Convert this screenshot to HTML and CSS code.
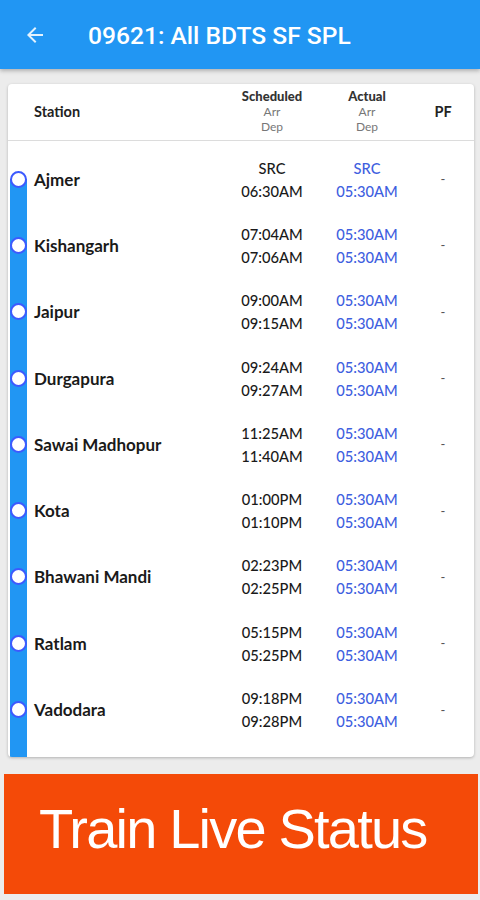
FILE: index.html
```html
<!DOCTYPE html>
<html lang="en">
<head>
  <meta charset="UTF-8">
  <meta name="viewport" content="width=device-width, initial-scale=1.0">
  <title>09621: All BDTS SF SPL</title>
  <link rel="stylesheet" href="styles.css">
</head>
<body>

<!-- Toolbar -->
<header class="toolbar">
  <svg class="back" width="24" height="24" viewBox="0 0 24 24">
    <path d="M20 11H7.83l5.59-5.59L12 4l-8 8 8 8 1.41-1.41L7.83 13H20v-2z" fill="#e3f2fd"/>
  </svg>
  <h1>09621: All BDTS SF SPL</h1>
</header>

<!-- Schedule card -->
<section class="card">
  <div class="head-row">
    <div class="col-station">Station</div>
    <div class="col-time">
      <b>Scheduled</b>
      <span>Arr</span>
      <span>Dep</span>
    </div>
    <div class="col-time">
      <b>Actual</b>
      <span>Arr</span>
      <span>Dep</span>
    </div>
    <div class="col-pf">PF</div>
  </div>

  <div class="stops">
    <div class="stop">
      <div class="rail"><i class="dot"></i></div>
      <div class="name">Ajmer</div>
      <div class="times"><span>SRC</span><span>06:30AM</span></div>
      <div class="times actual"><span>SRC</span><span>05:30AM</span></div>
      <div class="pf">-</div>
    </div>
    <div class="stop">
      <div class="rail"><i class="dot"></i></div>
      <div class="name">Kishangarh</div>
      <div class="times"><span>07:04AM</span><span>07:06AM</span></div>
      <div class="times actual"><span>05:30AM</span><span>05:30AM</span></div>
      <div class="pf">-</div>
    </div>
    <div class="stop">
      <div class="rail"><i class="dot"></i></div>
      <div class="name">Jaipur</div>
      <div class="times"><span>09:00AM</span><span>09:15AM</span></div>
      <div class="times actual"><span>05:30AM</span><span>05:30AM</span></div>
      <div class="pf">-</div>
    </div>
    <div class="stop">
      <div class="rail"><i class="dot"></i></div>
      <div class="name">Durgapura</div>
      <div class="times"><span>09:24AM</span><span>09:27AM</span></div>
      <div class="times actual"><span>05:30AM</span><span>05:30AM</span></div>
      <div class="pf">-</div>
    </div>
    <div class="stop">
      <div class="rail"><i class="dot"></i></div>
      <div class="name">Sawai Madhopur</div>
      <div class="times"><span>11:25AM</span><span>11:40AM</span></div>
      <div class="times actual"><span>05:30AM</span><span>05:30AM</span></div>
      <div class="pf">-</div>
    </div>
    <div class="stop">
      <div class="rail"><i class="dot"></i></div>
      <div class="name">Kota</div>
      <div class="times"><span>01:00PM</span><span>01:10PM</span></div>
      <div class="times actual"><span>05:30AM</span><span>05:30AM</span></div>
      <div class="pf">-</div>
    </div>
    <div class="stop">
      <div class="rail"><i class="dot"></i></div>
      <div class="name">Bhawani Mandi</div>
      <div class="times"><span>02:23PM</span><span>02:25PM</span></div>
      <div class="times actual"><span>05:30AM</span><span>05:30AM</span></div>
      <div class="pf">-</div>
    </div>
    <div class="stop">
      <div class="rail"><i class="dot"></i></div>
      <div class="name">Ratlam</div>
      <div class="times"><span>05:15PM</span><span>05:25PM</span></div>
      <div class="times actual"><span>05:30AM</span><span>05:30AM</span></div>
      <div class="pf">-</div>
    </div>
    <div class="stop">
      <div class="rail"><i class="dot"></i></div>
      <div class="name">Vadodara</div>
      <div class="times"><span>09:18PM</span><span>09:28PM</span></div>
      <div class="times actual"><span>05:30AM</span><span>05:30AM</span></div>
      <div class="pf">-</div>
    </div>
    <div class="rail-tail"></div>
  </div>
</section>

<!-- Promo banner -->
<div class="banner">Train Live Status</div>

</body>
</html>
```

FILE: styles.css
```css
body {
  margin: 0;
  background-color: #ececec;
  font-family: Lato, "Open Sans", sans-serif;
  color: #222;
}
.toolbar {
  display: flex;
  align-items: center;
  height: 69px;
  padding: 1px 0 0 23px;
  box-sizing: border-box;
  background-color: #2196f3;
  box-shadow: 0 2px 4px rgba(0, 0, 0, 0.25);
}
.toolbar h1 {
  margin: 0 0 0 41px;
  font-family: Roboto, sans-serif;
  font-size: 24.6px;
  font-weight: 500;
  color: #fff;
}
.card {
  margin: 15px 6px 0 8px;
  background-color: #fff;
  border-radius: 4px;
  box-shadow: 0 1px 3px rgba(0, 0, 0, 0.25);
  overflow: hidden;
}
.head-row, .stop {
  display: grid;
  grid-template-columns: 26px 196px 84px 106px 46px;
  align-items: center;
}
.head-row {
  height: 57px;
  padding-bottom: 2px;
  box-sizing: border-box;
  border-bottom: 1px solid #dcdcdc;
  font-size: 14.5px;
  font-weight: bold;
}
.head-row .col-station {
  grid-column: 2;
}
.col-time {
  display: flex;
  flex-direction: column;
  align-items: center;
  line-height: 15px;
}
.col-time b {
  font-size: 13px;
  color: #333;
}
.col-time span {
  font-size: 12px;
  font-weight: normal;
  color: #777;
}
.col-pf {
  text-align: center;
}
.stops {
  padding-top: 5px;
}
.stop {
  height: 66.3px;
}
.rail {
  align-self: stretch;
  display: flex;
  align-items: center;
  justify-content: center;
  width: 17px;
  margin-left: 2px;
  background-color: #2196f3;
}
.stop:first-child .rail {
  background: linear-gradient(#fff 50%, #2196f3 50%);
}
.rail-tail {
  width: 17px;
  height: 14px;
  margin-left: 2px;
  background-color: #2196f3;
}
.dot {
  width: 13px;
  height: 13px;
  border: 2.5px solid #3d5afe;
  border-radius: 50%;
  background-color: #fff;
}
.name {
  font-size: 17px;
  font-weight: bold;
  color: #1a1a1a;
}
.times {
  display: flex;
  flex-direction: column;
  align-items: center;
  gap: 5px;
  font-size: 14.7px;
  font-weight: 500;
  color: #1a1a1a;
}
.times.actual {
  color: #3f5fe0;
}
.pf {
  text-align: center;
  font-size: 13px;
  color: #555;
}
.banner {
  margin: 17px 2px 0 4px;
  height: 120px;
  display: flex;
  align-items: center;
  padding: 0 0 10px 35px;
  box-sizing: border-box;
  background-color: #f44a08;
  color: #fff;
  font-family: "Liberation Sans", Arial, sans-serif;
  font-size: 56px;
  letter-spacing: -1.8px;
}
```
